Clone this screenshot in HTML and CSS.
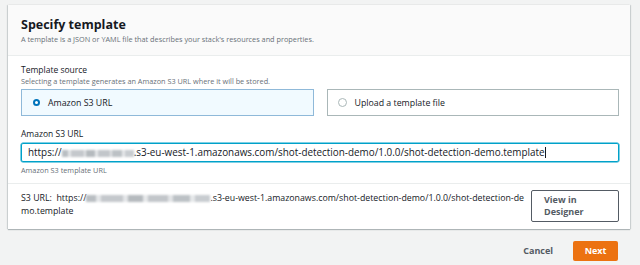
FILE: index.html
```html
<!DOCTYPE html>
<html lang="en">
<head>
    <meta charset="UTF-8">
    <title>Specify template</title>
    <link rel="stylesheet" href="styles.css">
</head>
<body>
    <div class="container">
        <div class="card-header">
            <h2>Specify template</h2>
            <p class="subtitle">A template is a JSON or YAML file that describes your stack's resources and properties.</p>
        </div>

        <div class="card-section">
            <div class="field-label">Template source</div>
            <div class="field-desc">Selecting a template generates an Amazon S3 URL where it will be stored.</div>
            <div class="tiles">
                <label class="tile selected"><span class="radio checked"></span>Amazon S3 URL</label>
                <label class="tile"><span class="radio"></span>Upload a template file</label>
            </div>

            <div class="field-label second">Amazon S3 URL</div>
            <div class="input">https://<span class="redacted short"></span>.s3-eu-west-1.amazonaws.com/shot-detection-demo/1.0.0/shot-detection-demo.template<span class="caret"></span></div>
            <div class="field-hint">Amazon S3 template URL</div>
        </div>

        <div class="card-section url-row">
            <div class="url-text">S3 URL:&nbsp; https://<span class="redacted long"></span>.s3-eu-west-1.amazonaws.com/shot-detection-demo/1.0.0/shot-detection-de<br>mo.template</div>
            <button type="button" class="btn-outline">View in Designer</button>
        </div>
    </div>

    <div class="footer">
        <button type="button" class="btn-link">Cancel</button>
        <button type="button" class="btn-primary">Next</button>
    </div>
</body>
</html>
```

FILE: styles.css
```css
:root {
    --page-bg: #f2f3f3;
    --header-bg: #fafafa;
    --border: #eaeded;
    --text: #16191f;
    --text-secondary: #687078;
    --button-text: #545b64;
    --blue: #0073bb;
    --focus: #00a1c9;
    --orange: #ec7211;
}

body {
    margin: 0;
    background-color: var(--page-bg);
    color: var(--text);
    font-family: "Open Sans", "Liberation Sans", Arial, sans-serif;
    font-size: 9px;
}

.container {
    margin: 5px 10px 0 8px;
    width: 622px;
    background: #fff;
    box-shadow: 0 1px 1px rgba(0, 28, 36, 0.25), 1px 0 1px rgba(0, 28, 36, 0.12), -1px 0 1px rgba(0, 28, 36, 0.12);
}

.card-header {
    background: var(--header-bg);
    border-bottom: 1px solid var(--border);
    padding: 11px 12px 0 13px;
    height: 39px;
}
.card-header h2 {
    margin: 0;
    font-size: 12.5px;
    line-height: 17px;
    font-weight: 700;
}
.subtitle {
    margin: 1px 0 0;
    font-size: 7.3px;
    line-height: 10px;
    color: var(--text-secondary);
}

.card-section { padding: 8px 11px 8px 13px; border-bottom: 1px solid var(--border); }
.card-section:last-child { border-bottom: none; }

.field-label { font-size: 8.5px; line-height: 12px; }
.field-label.second { margin-top: 12px; }
.field-desc, .field-hint {
    font-size: 7.3px; line-height: 10px; color: var(--text-secondary);
}
.field-hint { margin-top: 3px; }

.tiles { display: flex; gap: 13px; margin-top: 3px; }
.tile {
    flex: 1;
    display: flex;
    align-items: center;
    height: 25px;
    border: 1px solid #aab7b8;
    padding-left: 10px;
    font-size: 8.8px;
}
.tile.selected { background: #f1faff; border-color: #8fb9d9; }

.radio {
    width: 7px; height: 7px;
    border: 1px solid #aab7b8;
    border-radius: 50%;
    margin-right: 8px;
    box-sizing: content-box;
}
.radio.checked {
    width: 3px; height: 3px;
    border: 2.5px solid var(--blue);
    background: #fff;
    margin-left: 1px;
}

.input {
    margin-top: 3px;
    height: 17px;
    line-height: 17px;
    border: 1px solid var(--focus);
    border-radius: 2px;
    box-shadow: 0 0 0 0.5px var(--focus);
    padding: 0 6px;
    font-size: 9.9px;
    white-space: nowrap;
    overflow: hidden;
}
.caret {
    display: inline-block;
    width: 1px; height: 11px;
    background: var(--text);
    vertical-align: -2px;
}

/* blurred account part of the bucket name */
.redacted {
    display: inline-block;
    height: 7px;
    vertical-align: -1px;
    filter: blur(1.3px);
    background:
        linear-gradient(90deg, #b9bec2 0 8%, #e4e6e8 8% 12%, #c4c8cc 12% 30%, #e4e6e8 30% 34%, #b5babe 34% 46%, #e6e8ea 46% 50%, #c2c6ca 50% 66%, #e2e4e6 66% 70%, #bcc1c5 70% 84%, #e6e8ea 84% 88%, #c8ccd0 88% 100%);
}
.redacted.short { width: 72px; }
.redacted.long { width: 124px; }

.url-row {
    display: flex;
    justify-content: space-between;
    align-items: flex-start;
    padding-top: 6px;
    padding-bottom: 7px;
}
.url-text {
    font-size: 8.8px;
    line-height: 13px;
    padding-top: 2px;
    white-space: nowrap;
}

.btn-outline {
    width: 88px;
    height: 32px;
    background: #fff;
    border: 1px solid #545b64;
    border-radius: 2px;
    color: var(--button-text);
    font: 700 9px/12px "Open Sans", "Liberation Sans", Arial, sans-serif;
    text-align: left;
    padding: 2px 12px;
}

.footer {
    display: flex;
    justify-content: flex-end;
    align-items: center;
    gap: 14px;
    margin: 12px 22px 0 0;
}
.btn-link, .btn-primary {
    font: 700 9px/12px "Open Sans", "Liberation Sans", Arial, sans-serif;
    border: none;
    border-radius: 2px;
    height: 20px;
    padding: 0 12px;
}
.btn-link { background: transparent; color: var(--button-text); padding: 0 6px; }
.btn-primary { background: var(--orange); color: #fff; width: 45px; padding: 0; }
```
